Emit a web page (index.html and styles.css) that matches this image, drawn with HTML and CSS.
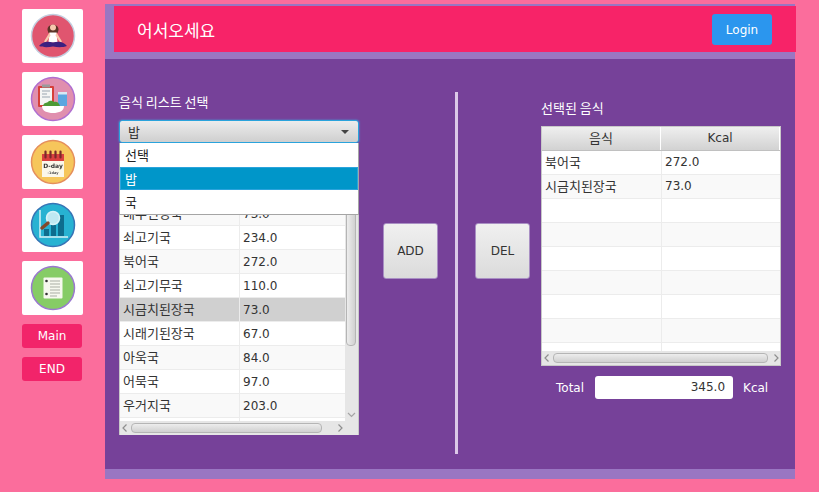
FILE: index.html
```html
<html>

<head>
    <meta charset="utf-8">
    <meta name="viewport" content="width=device-width, initial-scale=1.0">
    <title>어서오세요</title>
    <link rel="stylesheet" href="styles.css">
</head>

<body>
    <div class="side">
        <div class="icon-card">
            <svg width="46" height="46" viewBox="0 0 46 46">
                <circle cx="23" cy="23" r="21.500" fill="#e0556f" stroke="#c4cfe0" stroke-width="1.500"/>
                <path d="M17.500 17c-.5-7 11.500-7 11 0l-1 3h-9z" fill="#5b3427"/>
                <circle cx="23" cy="14.500" r="3" fill="#f7c9ae"/>
                <path d="M19.500 19.500h7l1 10h-9z" fill="#fff"/>
                <path d="M19.500 19.500l-5.500 9 1.800 1 4.700-7zM26.500 19.500l5.500 9-1.800 1-4.700-7z" fill="#f7c9ae"/>
                <path d="M9 33c4-5 9-5 14-3.500 5-1.500 10-1.500 14 3.500-4 1.500-9 1.500-14 .5-5 1-10 1-14-.5z" fill="#3c2080"/>
            </svg>
        </div>
        <div class="icon-card">
            <svg width="46" height="46" viewBox="0 0 46 46">
                <circle cx="23" cy="23" r="21.500" fill="#e08fae" stroke="#b06fd0" stroke-width="1.500"/>
                <rect x="8" y="10" width="16" height="21" rx="1" fill="#d6403a"/>
                <rect x="10" y="12" width="12" height="17" fill="#f4f4f4"/>
                <rect x="12" y="8.500" width="8" height="3" fill="#9a9a9a"/>
                <path d="M12 15h8M12 18h5M12 21h8" stroke="#9aa5b0" stroke-width="1"/>
                <rect x="28" y="17" width="9" height="13" fill="#5aa6e0"/>
                <rect x="28" y="16" width="9" height="2.500" fill="#d7e9f5"/>
                <path d="M13 30c1-4 4-3 5-4 2-2 5-1 6 0 2-1 5 0 6 4z" fill="#4d9a35"/>
                <path d="M12 30h22c0 5-5 7-11 7s-11-2-11-7z" fill="#fff"/>
            </svg>
        </div>
        <div class="icon-card">
            <svg width="46" height="46" viewBox="0 0 46 46">
                <circle cx="23" cy="23" r="21.500" fill="#f6c65b" stroke="#e58f5c" stroke-width="1.500"/>
                <rect x="12" y="17" width="22" height="21" fill="#fbf7ea"/>
                <rect x="12" y="15" width="22" height="7" fill="#d93f3f"/>
                <path d="M15.500 12.500v6M20.500 12.500v6M25.500 12.500v6M30.500 12.500v6" stroke="#7a2a2a" stroke-width="2.200" stroke-linecap="round"/>
                <text x="23" y="29" class="dday">D-day</text>
                <text x="23" y="34.500" class="dday-sub">-1day</text>
            </svg>
        </div>
        <div class="icon-card">
            <svg width="46" height="46" viewBox="0 0 46 46">
                <circle cx="23" cy="23" r="21.500" fill="#27b2d2" stroke="#3774b6" stroke-width="1.500"/>
                <path d="M10 8v27h28" fill="none" stroke="#d5f1f6" stroke-width="1.500"/>
                <path d="M14 27h5v7h-5zM21 23h5v11h-5zM28 13h6v21h-6z" fill="#0e6d8e"/>
                <circle cx="23" cy="16" r="6.500" fill="#bfe8f2" stroke="#d8f3f8" stroke-width="1.500"/>
                <path d="M18 21l-6 5" stroke="#84492a" stroke-width="3.500" stroke-linecap="round"/>
            </svg>
        </div>
        <div class="icon-card">
            <svg width="46" height="46" viewBox="0 0 46 46">
                <circle cx="23" cy="23" r="21.500" fill="#86cc66" stroke="#9a79d0" stroke-width="1.500"/>
                <rect x="13.500" y="12.500" width="19" height="21" rx="1" fill="#f6f8ef"/>
                <path d="M20 16h10M20 19h10M20 22h10M20 25h10M20 28h10M20 31h7" stroke="#a9ada4" stroke-width="1"/>
                <circle cx="16.500" cy="16" r="1.300" fill="#333"/>
                <circle cx="16.500" cy="29" r="1.300" fill="#333"/>
            </svg>
        </div>
        <button class="side-btn">Main</button>
        <button class="side-btn">END</button>
    </div>

    <div class="panel">
        <div class="top-strip">
            <div class="header">
                <span class="welcome">어서오세요</span>
                <button class="login">Login</button>
            </div>
        </div>

        <div class="content">
            <div class="left-col">
                <div class="label">음식 리스트 선택</div>
                <div class="combo">
                    <span>밥</span>
                    <i class="combo-arrow"></i>
                </div>
                <div class="popup">
                    <div class="popup-item">선택</div>
                    <div class="popup-item selected">밥</div>
                    <div class="popup-item">국</div>
                </div>

                <div class="table food-table">
                    <div class="table-head">
                        <div class="head-cell">음식</div>
                        <div class="head-cell">Kcal</div>
                    </div>
                    <div class="table-mid">
                        <div class="rows">
                            <div class="row"><div class="cell"></div><div class="cell"></div></div>
                            <div class="row"><div class="cell">배추된장국</div><div class="cell">73.0</div></div>
                            <div class="row"><div class="cell">쇠고기국</div><div class="cell">234.0</div></div>
                            <div class="row"><div class="cell">북어국</div><div class="cell">272.0</div></div>
                            <div class="row"><div class="cell">쇠고기무국</div><div class="cell">110.0</div></div>
                            <div class="row picked"><div class="cell">시금치된장국</div><div class="cell">73.0</div></div>
                            <div class="row"><div class="cell">시래기된장국</div><div class="cell">67.0</div></div>
                            <div class="row"><div class="cell">아욱국</div><div class="cell">84.0</div></div>
                            <div class="row"><div class="cell">어묵국</div><div class="cell">97.0</div></div>
                            <div class="row"><div class="cell">우거지국</div><div class="cell">203.0</div></div>
                            <div class="row"><div class="cell"></div><div class="cell"></div></div>
                        </div>
                        <div class="vbar">
                            <div class="vthumb"></div>
                            <svg class="vdown" width="13" height="8" viewBox="0 0 13 8"><path d="M3 2l3.500 3.500L10 2" fill="none" stroke="#a5a5a5" stroke-width="1.200"/></svg>
                        </div>
                    </div>
                    <div class="hbar">
                        <svg width="10" height="14" viewBox="0 0 10 14"><path d="M6.500 3.500L3 7l3.500 3.500" fill="none" stroke="#8f8f8f" stroke-width="1.200"/></svg>
                        <div class="hthumb"></div>
                        <svg width="10" height="14" viewBox="0 0 10 14"><path d="M3.500 3.500L7 7l-3.500 3.500" fill="none" stroke="#8f8f8f" stroke-width="1.200"/></svg>
                    </div>
                </div>
            </div>

            <button class="action add">ADD</button>
            <div class="divider"></div>
            <button class="action del">DEL</button>

            <div class="right-col">
                <div class="label">선택된 음식</div>
                <div class="table picked-table">
                    <div class="table-head">
                        <div class="head-cell">음식</div>
                        <div class="head-cell">Kcal</div>
                    </div>
                    <div class="table-mid">
                        <div class="rows">
                            <div class="row"><div class="cell">북어국</div><div class="cell">272.0</div></div>
                            <div class="row"><div class="cell">시금치된장국</div><div class="cell">73.0</div></div>
                            <div class="row"><div class="cell"></div><div class="cell"></div></div>
                            <div class="row"><div class="cell"></div><div class="cell"></div></div>
                            <div class="row"><div class="cell"></div><div class="cell"></div></div>
                            <div class="row"><div class="cell"></div><div class="cell"></div></div>
                            <div class="row"><div class="cell"></div><div class="cell"></div></div>
                            <div class="row"><div class="cell"></div><div class="cell"></div></div>
                            <div class="row"><div class="cell"></div><div class="cell"></div></div>
                        </div>
                    </div>
                    <div class="hbar">
                        <svg width="10" height="14" viewBox="0 0 10 14"><path d="M6.500 3.500L3 7l3.500 3.500" fill="none" stroke="#8f8f8f" stroke-width="1.200"/></svg>
                        <div class="hthumb"></div>
                        <svg width="10" height="14" viewBox="0 0 10 14"><path d="M3.500 3.500L7 7l-3.500 3.500" fill="none" stroke="#8f8f8f" stroke-width="1.200"/></svg>
                    </div>
                </div>
                <div class="total-row">
                    <span class="total-text">Total</span>
                    <div class="total-box">345.0</div>
                    <span class="total-text">Kcal</span>
                </div>
            </div>
        </div>

        <div class="bottom-strip"></div>
    </div>
</body>

</html>
```

FILE: styles.css
```css
body {
    background-color: #fb6d9c;
    height: 492px;
    margin: 0;
    padding: 0;
    display: flex;
    overflow: hidden;
    font-family: 'DejaVu Sans', 'Noto Sans CJK KR', sans-serif;
    font-size: 12px;
    color: #333;
}

button {
    font-family: inherit;
    border: none;
    padding: 0;
}

.side {
    width: 105px;
    padding: 9px 0 0 22px;
    box-sizing: border-box;
    display: flex;
    flex-direction: column;
    gap: 9px;
}

.icon-card {
    width: 61px;
    height: 54px;
    background-color: #fff;
    border-radius: 2px;
    display: flex;
    justify-content: center;
    align-items: center;
}

.icon-card svg {
    filter: blur(0.4px);
}

.dday {
    font-family: 'DejaVu Sans', sans-serif;
    font-size: 6px;
    font-weight: bold;
    text-anchor: middle;
    fill: #333;
}

.dday-sub {
    font-family: 'DejaVu Sans', sans-serif;
    font-size: 3.500px;
    font-weight: bold;
    text-anchor: middle;
    fill: #555;
}

.side-btn {
    width: 60px;
    height: 24px;
    background-color: #f2246a;
    border-radius: 3px;
    color: #fff;
    font-size: 12px;
}

.panel {
    width: 690px;
    height: 475px;
    margin-top: 4px;
    display: flex;
    flex-direction: column;
    background-color: #764199;
}

.top-strip {
    height: 55px;
    padding: 2px 0 0 9px;
    box-sizing: border-box;
    background-color: #9a76c2;
}

.header {
    width: 682px;
    height: 46px;
    background-color: #f72368;
    display: flex;
    justify-content: space-between;
    align-items: center;
    padding: 0 24px 0 23px;
    box-sizing: border-box;
}

.welcome {
    font-family: 'Noto Sans CJK KR', sans-serif;
    font-size: 17px;
    color: #fff;
}

.login {
    width: 60px;
    height: 31px;
    margin-top: 1px;
    background-color: #2b96ee;
    border-radius: 3px;
    color: #fff;
    font-size: 12px;
}

.content {
    flex: 1;
    display: flex;
    align-items: flex-start;
}

.left-col {
    position: relative;
    width: 240px;
    margin: 35px 0 0 14px;
}

.right-col {
    width: 240px;
    margin: 41px 0 0 11px;
}

.label {
    height: 16px;
    line-height: 16px;
    color: #fff;
    font-family: 'Noto Sans CJK KR', sans-serif;
    font-size: 13px;
}

.combo {
    margin-top: 10px;
    height: 23px;
    box-sizing: border-box;
    padding: 0 9px 0 8px;
    display: flex;
    justify-content: space-between;
    align-items: center;
    background: linear-gradient(#ececec, #cfcfcf);
    border: 1px solid #2aa3dc;
    border-radius: 3px;
    box-shadow: 0 0 2px #3ab0e6;
    font-family: 'Noto Sans CJK KR', sans-serif;
    font-size: 13px;
}

.combo-arrow {
    width: 0;
    height: 0;
    border-left: 4px solid transparent;
    border-right: 4px solid transparent;
    border-top: 4px solid #444;
}

.popup {
    position: absolute;
    left: 0;
    top: 49px;
    width: 240px;
    height: 72px;
    box-sizing: border-box;
    background-color: #fff;
    border: 1px solid #a5a5a5;
    border-top: none;
    z-index: 2;
}

.popup-item {
    height: 24px;
    line-height: 24px;
    padding-left: 5px;
    font-family: 'Noto Sans CJK KR', sans-serif;
    font-size: 13px;
    color: #222;
}

.popup-item.selected {
    height: 23px;
    line-height: 21px;
    box-sizing: border-box;
    background-color: #0096c9;
    border: 1px solid #2aa3dc;
    padding-left: 4px;
    color: #fff;
}

.table {
    width: 240px;
    background-color: #fff;
    border: 1px solid #c8c8c8;
    box-sizing: border-box;
}

.food-table {
    margin-top: 10px;
    height: 282px;
}

.picked-table {
    margin-top: 10px;
    height: 240px;
}

.table-head {
    height: 24px;
    box-sizing: border-box;
    display: flex;
    background: linear-gradient(#efefef, #d2d2d2);
    border-bottom: 1px solid #c0c0c0;
}

.head-cell {
    width: 120px;
    box-sizing: border-box;
    text-align: center;
    line-height: 23px;
    border-right: 1px solid #fff;
}

.head-cell:first-child {
    font-size: 13px;
}

.table-mid {
    display: flex;
    overflow: hidden;
}

.food-table .table-mid {
    height: 243px;
}

.picked-table .table-mid {
    height: 200px;
}

.rows {
    flex: 1;
}

.row {
    height: 24px;
    display: flex;
    box-sizing: border-box;
    border-bottom: 1px solid #ececec;
    background-color: #fff;
}

.row:nth-child(even) {
    background-color: #f9f9f9;
}

.row.picked {
    background-color: #d0d0d0;
}

.cell {
    width: 120px;
    flex: none;
    box-sizing: border-box;
    line-height: 23px;
    padding-left: 3px;
    border-right: 1px solid #ececec;
    color: #333;
}

.cell:first-child {
    font-size: 13px;
}

.food-table .cell:last-child {
    width: 105px;
    border-right: none;
}

.food-table .cell {
    line-height: 24px;
}

.vbar {
    position: relative;
    width: 13px;
    flex: none;
    background-color: #e6e6e6;
}

.vthumb {
    width: 10px;
    height: 168px;
    margin-left: 1px;
    background: linear-gradient(90deg, #ededed, #d0d0d0);
    border: 1px solid #b5b5b5;
    border-radius: 4px;
    box-sizing: border-box;
}

.vdown {
    position: absolute;
    left: 0;
    bottom: 2px;
}

.hbar {
    height: 14px;
    display: flex;
    align-items: center;
    box-sizing: border-box;
    background-color: #e6e6e6;
}

.hbar svg {
    flex: none;
}

.hthumb {
    flex: none;
    height: 10px;
    margin: 0 1px;
    box-sizing: border-box;
    background: linear-gradient(#ededed, #d0d0d0);
    border: 1px solid #b5b5b5;
    border-radius: 4px;
}

.food-table .hthumb {
    width: 191px;
    margin-right: 13px;
}

.picked-table .hthumb {
    width: 215px;
    margin-right: 3px;
}

.action {
    width: 55px;
    height: 56px;
    margin-top: 164px;
    background: linear-gradient(#f0f0f0, #dbdbdb);
    border: 1px solid #a98fc4;
    border-radius: 3px;
    box-sizing: border-box;
    color: #333;
    font-size: 12px;
}

.add {
    margin-left: 24px;
}

.del {
    margin-left: 17px;
}

.divider {
    width: 3px;
    height: 362px;
    margin: 33px 0 0 17px;
    background-color: #dcc8e8;
}

.total-row {
    display: flex;
    align-items: center;
    margin-top: 10px;
    padding-left: 15px;
}

.total-text {
    color: #fff;
}

.total-box {
    width: 138px;
    height: 23px;
    margin: 0 10px 0 11px;
    box-sizing: border-box;
    padding-right: 8px;
    line-height: 23px;
    text-align: right;
    background-color: #fff;
    border-radius: 3px;
}

.bottom-strip {
    height: 10px;
    background-color: #9a76c2;
}
```
